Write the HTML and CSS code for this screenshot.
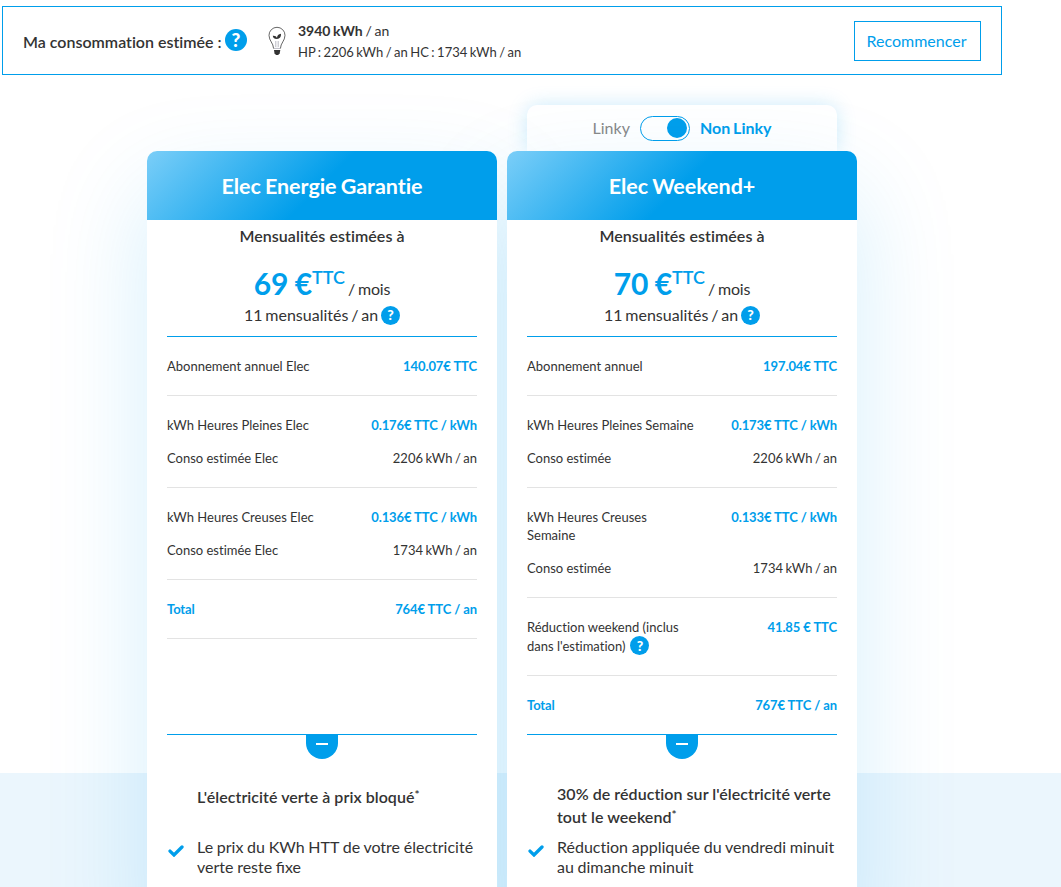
FILE: index.html
```html
<!DOCTYPE html>
<html lang="fr">
<head>
<meta charset="utf-8">
<title>Offres électricité</title>
<link rel="stylesheet" href="styles.css">
</head>
<body>
<svg class="defs" width="0" height="0">
  <symbol id="check" viewBox="0 0 16 12"><path d="M2 6.1 6 10 14 2" fill="none" stroke="currentColor" stroke-width="3.3" stroke-linecap="round"/></symbol>
</svg>
<section class="summary">
  <div class="summary-title">Ma consommation estimée :</div>
  <span class="help help-lg">?</span>
  <svg class="bulb" width="18" height="30" viewBox="0 0 18 30" fill="none">
    <path d="M5.600 22.600C5.400 17 1 14.800 1 9.300a8 8 0 0 1 16 0c0 5.500-4.400 7.700-4.600 13.300" stroke="#555" stroke-width=".9"/>
    <path d="M7.800 21v-6M10.200 21v-6M6 22.400h6" stroke="#889" stroke-width=".6"/>
    <path d="M9 13c-3.200 0-4-1.200-4.200-3.200C7 9.600 8.400 10.400 9 12c.2-2.400 1.400-4 4-4.200.2 3.200-1.200 5.200-4 5.200Z" fill="#333"/>
    <path d="M6 24h6.300l-.6 3.300-1.500 1.600H8L6.500 27.300Z" fill="#333"/>
  </svg>
  <div class="summary-values">
    <div class="summary-main"><b>3940 kWh</b> / an</div>
    <div class="summary-sub">HP : 2206 kWh / an HC : 1734 kWh / an</div>
  </div>
  <button class="restart">Recommencer</button>
</section>

<main class="offers">
  <div class="column column-plain">
    <article class="card">
      <h2 class="card-head">Elec Energie Garantie</h2>
      <div class="card-body">
        <div class="monthly">Mensualités estimées à</div>
        <div class="price"><span class="amount">69 €</span><span class="tax">TTC</span><span class="per">/ mois</span></div>
        <div class="count">11 mensualités / an <span class="help">?</span></div>
        <div class="details">
          <div class="group"><div class="row"><span>Abonnement annuel Elec</span><b>140.07€ TTC</b></div></div>
          <div class="group">
            <div class="row"><span>kWh Heures Pleines Elec</span><b>0.176€ TTC / kWh</b></div>
            <div class="row"><span>Conso estimée Elec</span><span class="qty">2206 kWh / an</span></div>
          </div>
          <div class="group">
            <div class="row"><span>kWh Heures Creuses Elec</span><b>0.136€ TTC / kWh</b></div>
            <div class="row"><span>Conso estimée Elec</span><span class="qty">1734 kWh / an</span></div>
          </div>
          <div class="group"><div class="row"><b>Total</b><b>764€ TTC / an</b></div></div>
        </div>
        <div class="fold"><span class="minus"></span></div>
        <h3 class="promise promise-single">L'électricité verte à prix bloqué<span class="star">*</span></h3>
        <div class="benefit"><svg class="check"><use href="#check"/></svg><p>Le prix du KWh HTT de votre électricité verte reste fixe</p></div>
      </div>
    </article>
  </div>
  <div class="column">
    <div class="meter"><span class="meter-off">Linky</span><span class="switch"><span class="knob"></span></span><b class="meter-on">Non Linky</b></div>
    <article class="card">
      <h2 class="card-head">Elec Weekend+</h2>
      <div class="card-body">
        <div class="monthly">Mensualités estimées à</div>
        <div class="price"><span class="amount">70 €</span><span class="tax">TTC</span><span class="per">/ mois</span></div>
        <div class="count">11 mensualités / an <span class="help">?</span></div>
        <div class="details">
          <div class="group"><div class="row"><span>Abonnement annuel</span><b>197.04€ TTC</b></div></div>
          <div class="group">
            <div class="row"><span>kWh Heures Pleines Semaine</span><b>0.173€ TTC / kWh</b></div>
            <div class="row"><span>Conso estimée</span><span class="qty">2206 kWh / an</span></div>
          </div>
          <div class="group">
            <div class="row"><span>kWh Heures Creuses<br>Semaine</span><b>0.133€ TTC / kWh</b></div>
            <div class="row"><span>Conso estimée</span><span class="qty">1734 kWh / an</span></div>
          </div>
          <div class="group"><div class="row"><div>Réduction weekend (inclus<div class="with-help">dans l'estimation) <span class="help">?</span></div></div><b>41.85 € TTC</b></div></div>
          <div class="group group-last"><div class="row"><b>Total</b><b>767€ TTC / an</b></div></div>
        </div>
        <div class="fold"><span class="minus"></span></div>
        <h3 class="promise">30% de réduction sur l'électricité verte tout le weekend<span class="star">*</span></h3>
        <div class="benefit"><svg class="check"><use href="#check"/></svg><p>Réduction appliquée du vendredi minuit au dimanche minuit</p></div>
      </div>
    </article>
  </div>
</main>
</body>
</html>
```
FILE: styles.css
```css
* { box-sizing: border-box; }
body {
  margin: 0;
  height: 887px;
  overflow: hidden;
  font-family: Lato, "Open Sans", sans-serif;
  font-variant-ligatures: none;
  color: #333;
  background: linear-gradient(#fff 773px, #ebf6fd 773px);
}
h2, h3, p { margin: 0; }
.defs { display: block; height: 0; }

.summary {
  display: flex;
  align-items: center;
  width: 1000px;
  height: 69px;
  margin: 6px 0 0 2px;
  padding: 0 20px;
  border: 1px solid #009eeb;
}
.summary-title { width: 199px; font-size: 16px; font-weight: 600; line-height: 20px; padding-top: 2px; white-space: nowrap; }
.help {
  display: inline-flex;
  align-items: center;
  justify-content: center;
  width: 19px;
  height: 19px;
  border-radius: 50%;
  background: #009eeb;
  color: #fff;
  font-size: 14px;
  line-height: 1;
  font-weight: 900;
  flex: none;
}
.help-lg { width: 22px; height: 22px; font-size: 19px; margin: 0 0 2px 3px; }
.bulb { margin-left: 21px; flex: none; }
.summary-values { margin-left: 12px; }
.summary-main { font-size: 14px; line-height: 21px; word-spacing: -.06em; }
.summary-main b { font-weight: 700; }
.summary-sub { font-size: 13px; line-height: 21px; padding-top: 1px; margin-bottom: -1px; word-spacing: -.065em; }
.restart {
  margin-left: auto;
  width: 127px;
  height: 40px;
  padding: 0 2px 0 0;
  border: 1px solid #009eeb;
  background: #fff;
  color: #009eeb;
  font: 16px Lato, sans-serif;
}

.offers {
  display: flex;
  gap: 10px;
  margin: 30px 0 0 147px;
  position: relative;
  z-index: 0;
}
.column { width: 350px; display: flex; flex-direction: column; }
.column-plain { padding-top: 46px; }
.meter {
  position: relative;
  z-index: -2;
  display: flex;
  align-items: center;
  justify-content: center;
  height: 46px;
  margin: 0 20px;
  border-radius: 10px 10px 0 0;
  background: #fff;
  box-shadow: 0 0 20px rgba(0, 158, 235, .2);
  font-size: 16px;
  word-spacing: -1px;
}
.meter-off, .meter-on { padding-bottom: 2px; }
.meter-off { color: #888; }
.meter-on { color: #009eeb; }
.switch {
  display: flex;
  justify-content: flex-end;
  align-items: center;
  width: 50px;
  height: 25px;
  margin: 0 10px;
  padding-right: 2px;
  border: 1px solid #009eeb;
  border-radius: 13px;
  background: #fff;
}
.knob { width: 20px; height: 20px; border-radius: 50%; background: #009eeb; }

.card { position: relative; flex: 1; display: flex; flex-direction: column; }
.card::before {
  content: "";
  position: absolute;
  inset: 0;
  z-index: -1;
  border-radius: 10px;
  box-shadow: 0 40px 100px rgba(0, 158, 235, .17);
}
.card-head {
  height: 69px;
  line-height: 70px;
  border-radius: 10px 10px 0 0;
  background: linear-gradient(135deg, #7bcef8, #009eeb 50%);
  color: #fff;
  font-size: 21.5px;
  font-weight: 700;
  letter-spacing: -.05px;
  word-spacing: -1px;
  text-align: center;
}
.card-body { flex: 1; display: flex; flex-direction: column; padding: 0 20px 60px; background: #fff; }
.monthly { padding-top: 6px; font-size: 16px; font-weight: 600; line-height: 20px; text-align: center; letter-spacing: .06px; }
.price { display: flex; justify-content: center; align-items: baseline; height: 40px; margin-top: 19px; line-height: 36px; word-spacing: -.07em; }
.amount { color: #009eeb; font-size: 30px; font-weight: 700; }
.tax { color: #009eeb; font-size: 18px; position: relative; top: -11px; font-weight: 600; }
.per { margin-left: 3px; font-size: 16px; letter-spacing: -.15px; }
.count { display: flex; justify-content: center; align-items: center; gap: 3px; height: 31px; padding-bottom: 11px; font-size: 16px; line-height: 18px; word-spacing: -.08em; }

.details { flex: 1; border-top: 1px solid #009eeb; font-size: 13px; line-height: 18px; }
.details b { color: #009eeb; font-weight: 700; letter-spacing: -.1px; }
.details .qty { word-spacing: -.065em; }
.group { display: flex; flex-direction: column; gap: 15px; padding: 20px 0; border-bottom: 1px solid #e3e3e3; }
.group-last { border-bottom: 0; }
.row { display: flex; justify-content: space-between; }
.with-help { display: flex; align-items: center; gap: 5px; height: 19px; }
.fold { height: 48px; border-top: 1px solid #009eeb; }
.minus {
  display: flex;
  align-items: center;
  justify-content: center;
  width: 32px;
  height: 24px;
  padding-bottom: 6px;
  margin: 0 auto;
  border-radius: 0 0 16px 16px;
  background: #009eeb;
}
.minus::before { content: ""; width: 12px; height: 2px; background: #fff; }
.promise { height: 55px; margin: 0 -10px 0 30px; font-size: 16px; font-weight: 600; line-height: 23px; letter-spacing: .05px; }
.promise-single { padding-top: 3px; }
.star { font-size: 12px; line-height: 0; vertical-align: 4px; }
.benefit { display: flex; margin-right: -10px; font-size: 16px; line-height: 20px; word-spacing: -.025em; }
.column-plain .benefit { font-variant-ligatures: normal; }
.check { flex: none; width: 16px; height: 12px; margin: 8px 13px 0 1px; color: #009eeb; }
```
